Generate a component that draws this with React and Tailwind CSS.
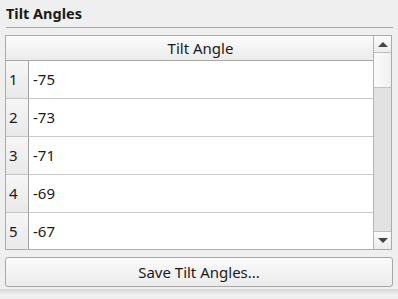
import React from 'react';

const angles = [-75, -73, -71, -69, -67];

const TiltAngles = () => {
    return (
        <div
            className="w-[398px] h-[299px] bg-[#efefef] overflow-hidden flex flex-col text-[#1a1a1a]"
            style={{ fontFamily: '"Noto Sans", "Open Sans", sans-serif' }}
        >
            {/* title */}
            <div className="pt-[4px] pl-[6px] h-[22px] text-[14.5px] leading-[18px] font-bold">Tilt Angles</div>
            <div className="mt-[5px] ml-[6px] w-[387px] h-px bg-[#a9a9a9]" />

            {/* table frame */}
            <div className="mt-[7px] ml-[5px] w-[387px] h-[215px] border border-[#ababab] flex overflow-hidden bg-white">
                <div className="flex-1 flex flex-col overflow-hidden">
                    <div className="h-[25px] shrink-0 flex border-b border-[#a9a9a9] bg-gradient-to-b from-[#fcfcfc] to-[#ebebeb]">
                        <div className="w-[22px]" />
                        <div className="flex-1 flex items-center justify-center text-[15px]">Tilt Angle</div>
                    </div>
                    {angles.map((angle, index) => (
                        <div key={index} className="h-[38px] shrink-0 flex">
                            <div className="w-[23px] border-r border-b border-r-[#a3a3a3] border-b-[#c4c4c4] bg-gradient-to-b from-[#f6f6f6] to-[#e9e9e9] flex items-center pl-[3px] text-[15px]">
                                {index + 1}
                            </div>
                            <div className="flex-1 border-b border-[#cacaca] flex items-center pl-[4px] text-[15px]">
                                {angle}
                            </div>
                        </div>
                    ))}
                </div>

                {/* scrollbar */}
                <div className="w-[18px] border-l border-[#b4b4b4] flex flex-col bg-[#e2e2e2]">
                    <div className="h-[17px] shrink-0 border-b border-[#c0c0c0] bg-gradient-to-b from-[#fafafa] to-[#ececec] flex items-center justify-center">
                        <div className="w-0 h-0 border-l-[5px] border-r-[5px] border-b-[5px] border-l-transparent border-r-transparent border-b-[#444444]" />
                    </div>
                    <div className="h-[35px] shrink-0 border-b border-[#c4c4c4] bg-gradient-to-r from-[#fbfbfb] to-[#f0f0f0]" />
                    <div className="flex-1" />
                    <div className="h-[18px] shrink-0 border-t border-[#c0c0c0] bg-gradient-to-b from-[#fafafa] to-[#ececec] flex items-center justify-center">
                        <div className="w-0 h-0 border-l-[5px] border-r-[5px] border-t-[5px] border-l-transparent border-r-transparent border-t-[#444444]" />
                    </div>
                </div>
            </div>

            {/* button */}
            <button className="mt-[7px] ml-[5px] w-[388px] h-[30px] shrink-0 rounded-[3px] border border-[#a8a8a8] bg-gradient-to-b from-[#fbfbfb] to-[#ebebeb] text-[15px] text-[#1a1a1a] flex items-center justify-center">
                Save Tilt Angles...
            </button>
            <div className="mt-[2px] h-[6px] bg-gradient-to-b from-[#d6d6d6] to-[#efefef]" />
        </div>
    );
};

export default function App() {
    return <TiltAngles />;
}
